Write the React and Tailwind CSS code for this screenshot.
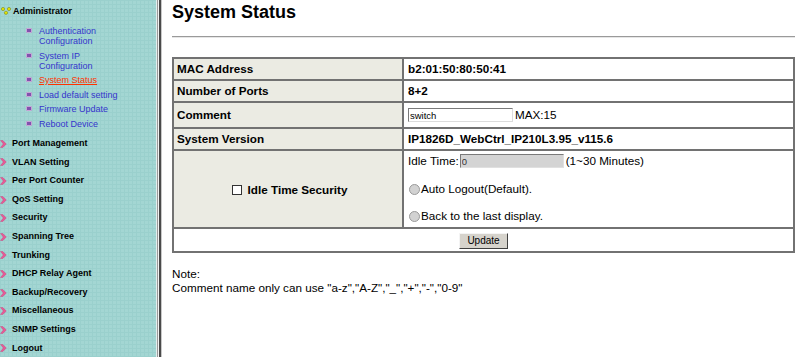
import React from 'react';

const font = { fontFamily: '"Liberation Sans", Arial, sans-serif' };

const subItems = [
  { lines: ['Authentication', 'Configuration'] },
  { lines: ['System IP', 'Configuration'] },
  { lines: ['System Status'], active: true },
  { lines: ['Load default setting'] },
  { lines: ['Firmware Update'] },
  { lines: ['Reboot Device'] },
];

const menuItems = [
  'Port Management',
  'VLAN Setting',
  'Per Port Counter',
  'QoS Setting',
  'Security',
  'Spanning Tree',
  'Trunking',
  'DHCP Relay Agent',
  'Backup/Recovery',
  'Miscellaneous',
  'SNMP Settings',
  'Logout',
];

const DotsIcon = () => (
  <svg width="10" height="8" viewBox="0 0 10 8" className="shrink-0">
    <circle cx="2" cy="2" r="1.6" fill="#e6e600" stroke="#7a8a20" strokeWidth="0.6" />
    <circle cx="8" cy="2" r="1.6" fill="#e6e600" stroke="#7a8a20" strokeWidth="0.6" />
    <circle cx="5" cy="5.8" r="1.6" fill="#e6e600" stroke="#7a8a20" strokeWidth="0.6" />
  </svg>
);

const ArrowIcon = () => (
  <svg width="7" height="8" viewBox="0 0 7 8" className="shrink-0">
    <path d="M0.5 0.5 L2.8 0.5 L6.3 4 L2.8 7.5 L0.5 7.5 L3.3 4 Z" fill="#e85a96" stroke="#c04078" strokeWidth="0.4" />
  </svg>
);

const Bullet = () => (
  <span className="mt-[2px] inline-block h-[5px] w-[6px] shrink-0 rounded-[1px] border border-[#c6a6d6] bg-[#8152ad]" />
);

const Sidebar = () => (
  <div className="flex h-[357px] shrink-0">
    <div className="w-[156px] bg-[#a3d6d3] bg-[linear-gradient(#9ad0cd_1px,transparent_1px),linear-gradient(90deg,#9ad0cd_1px,transparent_1px)] bg-[size:4px_4px] pt-[5px] text-[9px]">
      <div className="flex h-[12px] items-center gap-[2px] pl-[1px] font-bold leading-[12px] text-black">
        <DotsIcon />
        <span>Administrator</span>
      </div>
      <div className="mt-[9px] flex flex-col gap-[4.6px] pl-[26px]">
        {subItems.map((item, i) => (
          <div key={i} className="flex items-start gap-[7px] leading-[10px]">
            <Bullet />
            <div className={item.active ? 'text-[#ff3300] underline' : 'text-[#3535cc]'}>
              {item.lines.map((l) => (
                <div key={l}>{l}</div>
              ))}
            </div>
          </div>
        ))}
      </div>
      <div className="mt-[5.5px] flex flex-col">
        {menuItems.map((m) => (
          <div key={m} className="flex h-[18.6px] items-center gap-[5px] font-bold text-black">
            <ArrowIcon />
            <span>{m}</span>
          </div>
        ))}
      </div>
    </div>
    <div className="w-[1px] bg-[#e4eeee]" />
    <div className="w-[1px] bg-[#9a9a9a]" />
    <div className="w-[1px] bg-[#f2f2f2]" />
    <div className="w-[2px] bg-[#4a4a4a]" />
    <div className="w-[1px] bg-[#c8c8c8]" />
  </div>
);

const labelCell = 'border border-[#727272] bg-[#ebebe3] pl-[3px] font-bold';
const valueCell = 'border border-[#727272] bg-white pl-[4px]';

const Radio = () => (
  <span className="inline-block h-[11px] w-[11px] rounded-full border border-[#9a9a9a] bg-[#d2d2d2]" />
);

const App = () => (
  <div className="flex h-[357px] w-[800px] overflow-hidden bg-white text-black" style={font}>
    <Sidebar />
    <div className="flex-1 pl-[10px] pr-[5px] text-[11.7px]">
      <h1 className="mt-[1px] text-[18px] font-bold leading-[22px]">System Status</h1>
      <div className="mt-[13px] h-[2px] border-t border-b border-t-[#9a9a9a] border-b-[#e6e6e6]" />
      <table className="mt-[19px] w-full border-separate border-spacing-0 border border-[#727272] leading-[14px]">
        <tbody>
          <tr>
            <td className={`${labelCell} h-[22px] w-[230px]`}>MAC Address</td>
            <td className={`${valueCell} font-bold`}>b2:01:50:80:50:41</td>
          </tr>
          <tr>
            <td className={`${labelCell} h-[22px]`}>Number of Ports</td>
            <td className={`${valueCell} font-bold`}>8+2</td>
          </tr>
          <tr>
            <td className={`${labelCell} h-[26px]`}>Comment</td>
            <td className={valueCell}>
              <div className="flex items-center">
                <input
                  readOnly
                  value="switch"
                  className="h-[14px] w-[105px] border border-t-[#7a7a7a] border-l-[#7a7a7a] border-r-[#dcdcdc] border-b-[#dcdcdc] bg-white px-[1px] text-[9.5px] leading-[12px] outline-none"
                />
                <span className="ml-[2px]">MAX:15</span>
              </div>
            </td>
          </tr>
          <tr>
            <td className={`${labelCell} h-[22px]`}>System Version</td>
            <td className={`${valueCell} font-bold`}>IP1826D_WebCtrl_IP210L3.95_v115.6</td>
          </tr>
          <tr>
            <td className={`${labelCell} h-[78px] pl-0 text-center`}>
              <div className="flex items-center justify-center gap-[6px] pt-[2px]">
                <span className="inline-block h-[10px] w-[10px] border border-[#333] bg-white" />
                <span>Idle Time Security</span>
              </div>
            </td>
            <td className={`${valueCell} align-top`}>
              <div className="flex h-[20px] items-center">
                <span>Idle Time:</span>
                <input
                  readOnly
                  value="0"
                  className="ml-[1px] h-[14px] w-[104px] border border-t-[#7a7a7a] border-l-[#7a7a7a] border-r-[#e0e0e0] border-b-[#e0e0e0] bg-[#d4d4d4] px-[1px] text-[9.5px] leading-[12px] text-[#333] outline-none"
                />
                <span className="ml-[2px]">(1~30 Minutes)</span>
              </div>
              <div className="mt-[8px] flex h-[20px] items-center gap-[1px] pl-[1px]">
                <Radio />
                <span>Auto Logout(Default).</span>
              </div>
              <div className="mt-[7px] flex h-[20px] items-center gap-[1px] pl-[1px]">
                <Radio />
                <span>Back to the last display.</span>
              </div>
            </td>
          </tr>
          <tr>
            <td colSpan={2} className="h-[24px] border border-[#727272] bg-white text-center">
              <button className="mt-[1px] h-[16px] w-[49px] border border-t-[#f4f4f4] border-l-[#f4f4f4] border-r-[#404040] border-b-[#404040] bg-[#d6d3cc] text-[10px] leading-[12px]">
                Update
              </button>
            </td>
          </tr>
        </tbody>
      </table>
      <div className="mt-[14px] leading-[14px]">
        <div>Note:</div>
        <div>Comment name only can use "a-z","A-Z","_","+","-","0-9"</div>
      </div>
    </div>
  </div>
);

export default App;
